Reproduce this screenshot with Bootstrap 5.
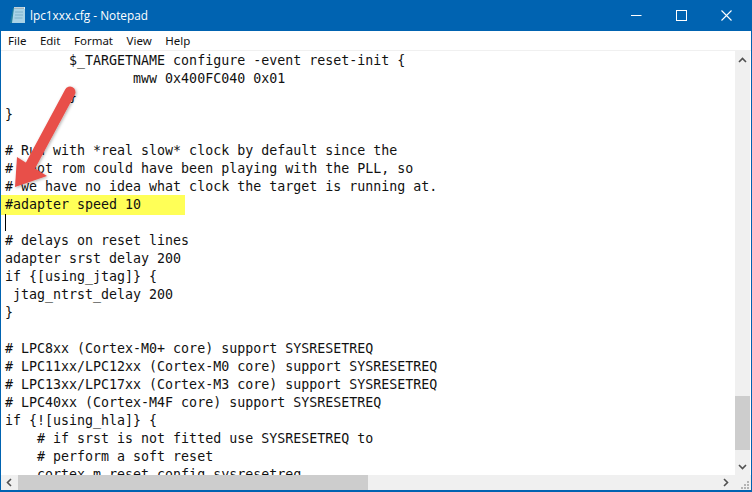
<!DOCTYPE html>
<html lang="en">
<head>
<meta charset="utf-8">
<title>lpc1xxx.cfg - Notepad</title>
<link href="https://cdn.jsdelivr.net/npm/bootstrap@5.3.0/dist/css/bootstrap.min.css" rel="stylesheet">
<style>
html,body{margin:0;height:492px;overflow:hidden;background:#fff}
.npwin{width:752px;height:492px;border-left:1px solid #0063b1;border-right:1px solid #0063b1;border-bottom:2px solid #0063b1;position:relative;font-family:"Noto Sans","Open Sans",sans-serif}
.nptitle{height:31px;flex:none;background:#0063b1;color:#fff;font-size:11.8px;font-family:"Open Sans","Noto Sans",sans-serif;margin-left:-1px;margin-right:-1px}
.npico{margin-left:10px;margin-right:3px}
.npctl{width:45px;height:31px}
.npctls{margin-right:3px}
.npmenu{height:20px;flex:none;font-size:11.5px;color:#111;padding-left:7px;gap:13.5px;border-bottom:1px solid #f0f0f0;line-height:19px}
.npbody{height:424px;flex:none;min-height:0}
.nptext{font-family:"DejaVu Sans Mono",monospace;font-size:13.3px;line-height:18px;color:#111;padding-left:4px;padding-top:1px;white-space:pre;overflow:hidden}
.npline{height:18px}
.nphl{background:#ffff57;width:184px;margin:-1px 0 -1px -4px;padding:1px 0 1px 4px;height:20px;position:relative}
.npcaret{position:absolute;left:4px;top:163px;width:1px;height:17px;background:#000}
.npvs{width:15px;background:#f0f0f0;margin-right:1px}
.nphs{height:15px;flex:none;background:#f0f0f0}
.npbtn{width:15px;height:17px;flex:none}
.npbtn-h{width:15px;height:15px;flex:none}
.npthumb-v{background:#cdcdcd;height:54px;margin-top:328px}
.npthumb-h{background:#cdcdcd;width:350px;height:15px;margin-left:2px}
.npgrip{width:18px;height:15px;flex:none}
.nparrow{position:absolute;left:0;top:0;pointer-events:none}
</style>
</head>
<body>
<div class="npwin d-flex flex-column">
  <div class="nptitle d-flex align-items-center">
    <svg class="npico" width="17" height="17" viewBox="0 0 17 17"><path d="M3 1h12v15H0z" fill="#1f7f9f"/><path d="M4 1h11v15H2z" fill="#a9d3e6"/><path d="M5 5h8M5 8h8M4.500 11h8" stroke="#7fb2c9" stroke-width="1"/><path d="M4 0h11v2H4z" fill="#dfeef5"/><path d="M5 .5v1.500M7 .5v1.500M9 .5v1.500M11 .5v1.500M13 .5v1.500" stroke="#40606f" stroke-width=".8"/></svg>
    <span>lpc1xxx.cfg - Notepad</span>
    <div class="npctls ms-auto d-flex">
      <div class="npctl d-flex align-items-center justify-content-center"><svg width="11" height="11" viewBox="0 0 11 11"><path d="M0 5.500h10.500" stroke="#fff"/></svg></div>
      <div class="npctl d-flex align-items-center justify-content-center"><svg width="11" height="11" viewBox="0 0 11 11"><rect x=".5" y=".5" width="10" height="10" fill="none" stroke="#fff"/></svg></div>
      <div class="npctl d-flex align-items-center justify-content-center"><svg width="11" height="11" viewBox="0 0 11 11"><path d="M.5.5l10 10M10.500.5l-10 10" stroke="#fff" stroke-width="1.100"/></svg></div>
    </div>
  </div>
  <div class="npmenu d-flex"><span>File</span><span>Edit</span><span>Format</span><span>View</span><span>Help</span></div>
  <div class="npbody d-flex">
    <div class="nptext flex-grow-1 position-relative"><div class="npline">        $_TARGETNAME configure -event reset-init {</div><div class="npline">                mww 0x400FC040 0x01</div><div class="npline">        }</div><div class="npline">}</div><div class="npline"></div><div class="npline"># Run with *real slow* clock by default since the</div><div class="npline"># boot rom could have been playing with the PLL, so</div><div class="npline"># we have no idea what clock the target is running at.</div><div class="nphl">#adapter speed 10</div><div class="npline"></div><div class="npline"># delays on reset lines</div><div class="npline">adapter srst delay 200</div><div class="npline">if {[using_jtag]} {</div><div class="npline"> jtag_ntrst_delay 200</div><div class="npline">}</div><div class="npline"></div><div class="npline"># LPC8xx (Cortex-M0+ core) support SYSRESETREQ</div><div class="npline"># LPC11xx/LPC12xx (Cortex-M0 core) support SYSRESETREQ</div><div class="npline"># LPC13xx/LPC17xx (Cortex-M3 core) support SYSRESETREQ</div><div class="npline"># LPC40xx (Cortex-M4F core) support SYSRESETREQ</div><div class="npline">if {![using_hla]} {</div><div class="npline">    # if srst is not fitted use SYSRESETREQ to</div><div class="npline">    # perform a soft reset</div><div class="npline">    cortex_m reset_config sysresetreq</div><div class="npcaret"></div></div>
    <div class="npvs d-flex flex-column">
      <div class="npbtn d-flex align-items-center justify-content-center"><svg width="9" height="6" viewBox="0 0 9 6"><path d="M1 5l3.500-3.500L8 5" fill="none" stroke="#505050" stroke-width="1.600"/></svg></div>
      <div class="npthumb-v"></div>
      <div class="npbtn d-flex align-items-center justify-content-center mt-2"><svg width="9" height="6" viewBox="0 0 9 6"><path d="M1 1l3.500 3.500L8 1" fill="none" stroke="#505050" stroke-width="1.600"/></svg></div>
    </div>
  </div>
  <div class="nphs d-flex align-items-start">
    <div class="npbtn-h d-flex align-items-center justify-content-center"><svg width="6" height="9" viewBox="0 0 6 9"><path d="M5 1L1.500 4.500 5 8" fill="none" stroke="#505050" stroke-width="1.600"/></svg></div>
    <div class="npthumb-h"></div>
    <div class="npbtn-h d-flex align-items-center justify-content-center ms-auto"><svg width="6" height="9" viewBox="0 0 6 9"><path d="M1 1l3.500 3.500L1 8" fill="none" stroke="#505050" stroke-width="1.600"/></svg></div>
    <svg class="npgrip" viewBox="0 0 18 15"><g fill="#b4b4b4"><rect x="14" y="6" width="2" height="2"/><rect x="11" y="9" width="2" height="2"/><rect x="14" y="9" width="2" height="2"/><rect x="8" y="12" width="2" height="2"/><rect x="11" y="12" width="2" height="2"/><rect x="14" y="12" width="2" height="2"/></g></svg>
  </div>
  <svg class="nparrow" width="752" height="492" viewBox="0 0 752 492">
    <defs><filter id="npsh" x="-20%" y="-20%" width="140%" height="140%"><feDropShadow dx="1" dy="1" stdDeviation="1.500" flood-color="#000" flood-opacity=".3"/></filter></defs>
    <g filter="url(#npsh)"><path d="M69 92L26 172" stroke="#e8504a" stroke-width="11" stroke-linecap="round" fill="none"/><path d="M16 157L46 176 14 187z" fill="#e8504a"/></g>
  </svg>
</div>
</body>
</html>
